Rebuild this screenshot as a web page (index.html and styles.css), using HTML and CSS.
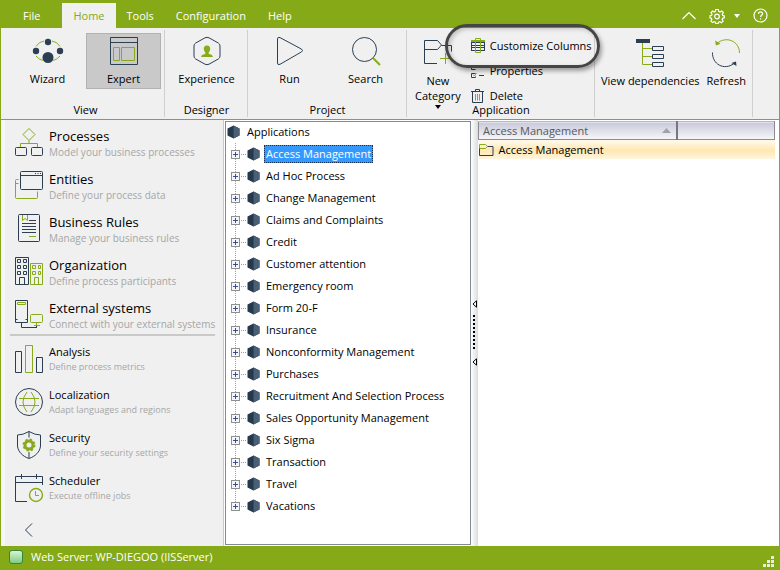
FILE: index.html
```html
<!DOCTYPE html>
<html lang="en">
<head>
  <meta charset="UTF-8">
  <meta name="viewport" content="width=device-width, initial-scale=1.0">
  <title>Web Server: WP-DIEGOO (IISServer)</title>
  <link rel="stylesheet" href="styles.css">
</head>
<body>
  <!-- Shared tree icon -->
  <svg class="defs" width="0" height="0" aria-hidden="true">
    <symbol id="hex" viewBox="0 0 13 14">
      <path d="M6.500 0.500 12.500 3.500V10.500L6.500 13.500 0.500 10.500V3.500Z" fill="#25394d"/>
      <path d="M6.500 0.500 12.500 3.500V10.500L6.500 13.500Z" fill="#4a5f73"/>
    </symbol>
  </svg>

  <!-- Tabs -->
  <header class="titlebar">
    <nav class="tabs">
      <button class="tab tab-file" type="button">File</button>
      <button class="tab active" type="button">Home</button>
      <button class="tab" type="button">Tools</button>
      <button class="tab" type="button">Configuration</button>
      <button class="tab" type="button">Help</button>
    </nav>
    <div class="tools">
      <button class="tool" type="button" aria-label="Collapse ribbon">
        <svg width="14" height="9" viewBox="0 0 14 9"><path d="M0.500 8 7 1.500 13.500 8"/></svg>
      </button>
      <button class="tool tool-settings" type="button" aria-label="Settings">
        <svg width="16" height="16" viewBox="0 0 16 16"><path d="M6.700 1.500h2.600l.4 1.900 1.300.6 1.700-1 1.600 1.700-1 1.700.4 1.100 1.600.3v2l-1.700.5-.5 1.200 1 1.600-1.700 1.600-1.600-1-1.300.5-.4 1.300H6.900l-.5-1.400-1.300-.5-1.600 1-1.600-1.500 1-1.700-.5-1.200L1 9.900V7.700l1.500-.3.500-1.100-1-1.700L3.600 3l1.600 1 1.100-.6z"/><circle cx="8" cy="8.500" r="2.300"/></svg>
        <svg width="6" height="4" viewBox="0 0 6 4"><path class="solid" d="M0 0h6L3 4z"/></svg>
      </button>
      <button class="tool" type="button" aria-label="Help">
        <svg width="15" height="15" viewBox="0 0 15 15"><circle cx="7.500" cy="7.500" r="6.500"/><path d="M5.500 6c0-2.800 4.200-2.600 4.100-.2C9.500 7.200 7.600 7.300 7.600 9M7.600 10.300v1.200"/></svg>
      </button>
    </div>
  </header>

  <!-- Ribbon -->
  <section class="ribbon">
    <div class="group group-view">
      <div class="group-items">
        <button class="big" type="button">
          <svg width="32" height="30" viewBox="0 0 32 30">
            <path class="g" d="M4 10.500Q7 5.500 12 5M20 5q5 .5 8 5.500M4 20q3 3.500 7 4.500M21 24.500q4-1 7-4.500"/>
            <circle class="fd" cx="16" cy="6" r="3.200"/><circle class="fd" cx="4" cy="15" r="3.200"/><circle class="fd" cx="28" cy="15" r="3.200"/><circle class="fd" cx="16" cy="21.500" r="5.500"/>
          </svg>
          <span>Wizard</span>
        </button>
        <button class="big pressed" type="button">
          <svg width="30" height="30" viewBox="0 0 30 30">
            <path class="d" d="M1.500 1.500h27v27h-27zM1.500 6.500h27"/>
            <path class="g" d="M4.500 11.500h6v13h-6zM12.500 11.500h13v13h-13z"/>
          </svg>
          <span>Expert</span>
        </button>
      </div>
      <div class="group-name">View</div>
    </div>
    <div class="group">
      <div class="group-items">
        <button class="big" type="button">
          <svg width="30" height="30" viewBox="0 0 30 30">
            <path class="d" d="M13 1.800q2-1 4 0l9.300 5.200q1.700 1 1.700 3v10q0 2-1.700 3L17 28.200q-2 1-4 0L3.700 23Q2 22 2 20V10q0-2 1.700-3z"/>
            <path class="fg" d="M15 9.500c2.600 0 3.400 1.800 3.200 3.700-.2 1.600-1 2.600-1.500 3.300v1.400c1.800.4 4 .8 4.300 3.100H9c.3-2.300 2.500-2.700 4.300-3.100v-1.400c-.5-.7-1.300-1.700-1.500-3.300-.2-1.900.6-3.700 3.200-3.700z"/>
          </svg>
          <span>Experience</span>
        </button>
      </div>
      <div class="group-name">Designer</div>
    </div>
    <div class="group">
      <div class="group-items">
        <button class="big" type="button">
          <svg width="30" height="30" viewBox="0 0 30 30"><path class="d" d="M2.500 3q0-2.500 2.500-1.400l21.500 11.500q2 1.400 0 2.800L5 28.300q-2.500 1.200-2.500-1.300z"/></svg>
          <span>Run</span>
        </button>
        <button class="big" type="button">
          <svg width="30" height="30" viewBox="0 0 30 30"><circle class="d" cx="13.500" cy="13.500" r="12"/><path class="g2" d="m22 22 7 7"/></svg>
          <span>Search</span>
        </button>
      </div>
      <div class="group-name">Project</div>
    </div>
    <div class="group group-app">
      <div class="group-items">
        <button class="big low" type="button">
          <svg width="30" height="30" viewBox="0 0 30 30">
            <path class="d" d="M14 25.500H1.500v-23h13l4 4.500-4 4.500h-13M18.500 7.500h10v6"/>
            <path class="g" d="M17 20.500h11M22.500 15v11"/>
          </svg>
          <span>New<br>Category</span>
          <svg class="drop" width="6" height="4" viewBox="0 0 6 4"><path d="M0 0h6L3 4z"/></svg>
        </button>
        <div class="small-list">
          <div class="callout-anchor">
            <button class="small" type="button">
              <svg width="16" height="16" viewBox="0 0 16 16">
                <path class="fd" d="M1 2h14v11H1z"/><path class="fg" d="M1 2h14v2H1z"/>
                <path class="cells" d="M2 5h3v2H2zM2 8h3v1H2zM2 10h3v2H2zM11 5h3v2h-3zM11 8h3v1h-3zM11 10h3v2h-3zM6 5h4v2H6zM6 8h4v1H6zM6 10h4v2H6zM6 13h4v2H6z"/>
                <path class="g" d="M5.500 .5h5v14h-5z"/>
              </svg>
              <span>Customize Columns</span>
            </button>
            <i class="callout"></i>
          </div>
          <button class="small" type="button">
            <svg width="16" height="16" viewBox="0 0 16 16"><path class="d" d="M5.500 2.500h-4v4h4M5.500 10.500h-4v4h4v-1M9 12.500h5"/><path class="g" d="m3 3.500 1.500 1.500 2-3M3 11.500l1.500 1.500 2-3"/></svg>
            <span>Properties</span>
          </button>
          <button class="small" type="button">
            <svg width="16" height="16" viewBox="0 0 16 16"><path class="d" d="M1 3.500h13M5.500 3.500v-2h4v2M2.500 3.500v11h10v-11"/><path class="g" d="M5.500 6v6.500M7.500 6v6.500M9.500 6v6.500"/></svg>
            <span>Delete</span>
          </button>
        </div>
      </div>
      <div class="group-name">Application</div>
    </div>
    <div class="group group-last">
      <div class="group-items">
        <button class="big low" type="button">
          <svg width="30" height="30" viewBox="0 0 30 30">
            <path class="fd" d="M1 1h14v4H1z"/><path class="g" d="M7.500 5v21.500H17M7.500 10.500H17M7.500 18.500H17"/>
            <path class="d" d="M17.500 8.500h11v4h-11zM17.500 16.500h11v4h-11zM17.500 24.500h11v4h-11z"/>
          </svg>
          <span>View dependencies</span>
        </button>
        <button class="big low" type="button">
          <svg width="30" height="30" viewBox="0 0 30 30">
            <path class="g" d="M6 5.500C15-2.500 28.500 3 28.500 15"/><path class="fg" d="m4 2.500 1 5 4.500-1.700z"/>
            <path class="d" d="M1.500 14.500C1 26 13 33 23 25.500"/><path class="fd" d="m20.500 25 4.500-1.500.5 4.500z"/>
          </svg>
          <span>Refresh</span>
        </button>
      </div>
    </div>
  </section>

  <main class="workspace">
    <!-- Module list -->
    <nav class="sidebar">
      <ul class="modules">
        <li><a class="module" href="#">
          <svg width="30" height="30" viewBox="0 0 30 30">
            <path class="g" d="m15 1.500 6 6-6 6-6-6zM15 13.500v3M6.500 20v-3.500h17V20"/>
            <rect class="d" x="1.500" y="20.500" width="11" height="8" rx="1"/><rect class="d" x="17.500" y="20.500" width="11" height="8" rx="1"/>
          </svg>
          <span class="text"><b>Processes</b><small>Model your business processes</small></span></a></li>
        <li><a class="module" href="#">
          <svg width="30" height="30" viewBox="0 0 30 30">
            <path class="g" d="M4.500 9.500h-2q-1 0-1 1v17q0 1 1 1h20q1 0 1-1v-6M1.500 13.500h3"/>
            <rect class="d" x="6.500" y="1.500" width="22" height="18" rx="1"/><path class="d" d="M6.500 5.500h22M21 3.500h1M23.500 3.500h1M26 3.500h1"/>
          </svg>
          <span class="text"><b>Entities</b><small>Define your process data</small></span></a></li>
        <li><a class="module" href="#">
          <svg width="30" height="30" viewBox="0 0 30 30">
            <rect class="d" x="4.500" y="1.500" width="21" height="27" rx="1"/><path class="d" d="M15 7.500h7M8 10.500h14M8 13.500h14M8 16.500h14M8 19.500h14"/>
            <path class="g" d="M8.500 2v5.500l2.500-2 2.500 2V2M15 23.500h7"/>
          </svg>
          <span class="text"><b>Business Rules</b><small>Manage your business rules</small></span></a></li>
        <li><a class="module" href="#">
          <svg width="30" height="30" viewBox="0 0 30 30">
            <path class="d" d="M1.500 1.500h13v27h-13zM3.500 3.500h3v3h-3zM9.500 3.500h3v3h-3zM3.500 9.500h3v3h-3zM9.500 9.500h3v3h-3zM3.500 15.500h3v3h-3zM9.500 15.500h3v3h-3zM5.500 28v-6.500h5V28"/>
            <path class="g" d="M16.500 7.500h12v21h-12zM18.500 9.500h3v3h-3zM24.500 9.500h2v3h-2zM18.500 15.500h3v3h-3zM24.500 15.500h2v3h-2zM20.500 28v-6.500h4V28"/>
          </svg>
          <span class="text"><b>Organization</b><small>Define process participants</small></span></a></li>
        <li><a class="module" href="#">
          <svg width="30" height="30" viewBox="0 0 30 30">
            <path class="d" d="M3.500 20.500h-2v3h12v-3h-2M1.500 21V1.500h12V21M7.500 23.500v5h15v-2M18 28.500h5"/>
            <path class="g" d="M3.500 3.500h8v2h-8z"/><rect class="g" x="16.500" y="15.500" width="12" height="8" rx="1"/><path class="g" d="M22.500 24v3M20 26.500h6"/>
          </svg>
          <span class="text"><b>External systems</b><small>Connect with your external systems</small></span></a></li>
      </ul>
      <ul class="modules minor">
        <li><a class="module" href="#">
          <svg width="30" height="30" viewBox="0 0 30 30"><path class="d" d="M1.500 7.500h6v21h-6zM22.500 13.500h6v15h-6z"/><path class="g" d="M11.500 1.500h7v27h-7z"/></svg>
          <span class="text"><b>Analysis</b><small>Define process metrics</small></span></a></li>
        <li><a class="module" href="#">
          <svg width="30" height="30" viewBox="0 0 30 30"><circle class="d" cx="15" cy="15" r="13.500"/><path class="g" d="M5 11.500h20M5 18.500h20M13 5q-8 10 0 20M17 5q8 10 0 20"/></svg>
          <span class="text"><b>Localization</b><small>Adapt languages and regions</small></span></a></li>
        <li><a class="module" href="#">
          <svg width="30" height="30" viewBox="0 0 30 30">
            <path class="d" d="M15 1.500Q9 5 3.500 5v11C4 22 9 26.500 15 28.500 21 26.500 26 22 26.500 16V5Q21 5 15 1.500zM15 1.500v6M15 22v6"/>
            <circle class="gear-teeth" cx="15" cy="15" r="5.500"/><circle class="gear-ring" cx="15" cy="15" r="4"/>
          </svg>
          <span class="text"><b>Security</b><small>Define your security settings</small></span></a></li>
        <li><a class="module" href="#">
          <svg width="30" height="30" viewBox="0 0 30 30">
            <path class="d" d="M13 28.500H1.500v-25h27V12M1.500 9.500h27M7.500 1v5M22.500 1v5"/>
            <circle class="g thick" cx="22" cy="22" r="6.500"/><path class="g" d="M21.500 18v4.500H25"/>
          </svg>
          <span class="text"><b>Scheduler</b><small>Execute offline jobs</small></span></a></li>
      </ul>
      <button class="back" type="button" aria-label="Collapse menu">
        <svg width="9" height="14" viewBox="0 0 9 14"><path class="d" d="M8 .5 1.500 7 8 13.500"/></svg>
      </button>
    </nav>

    <!-- Application tree -->
    <section class="tree">
      <div class="node root"><svg class="hex" width="13" height="14"><use href="#hex"/></svg><span class="name">Applications</span></div>
      <ul class="branch">
        <li class="node"><button class="plus" type="button" aria-label="Expand"></button><svg class="hex" width="13" height="14"><use href="#hex"/></svg><span class="name selected">Access Management</span></li>
        <li class="node"><button class="plus" type="button" aria-label="Expand"></button><svg class="hex" width="13" height="14"><use href="#hex"/></svg><span class="name">Ad Hoc Process</span></li>
        <li class="node"><button class="plus" type="button" aria-label="Expand"></button><svg class="hex" width="13" height="14"><use href="#hex"/></svg><span class="name">Change Management</span></li>
        <li class="node"><button class="plus" type="button" aria-label="Expand"></button><svg class="hex" width="13" height="14"><use href="#hex"/></svg><span class="name">Claims and Complaints</span></li>
        <li class="node"><button class="plus" type="button" aria-label="Expand"></button><svg class="hex" width="13" height="14"><use href="#hex"/></svg><span class="name">Credit</span></li>
        <li class="node"><button class="plus" type="button" aria-label="Expand"></button><svg class="hex" width="13" height="14"><use href="#hex"/></svg><span class="name">Customer attention</span></li>
        <li class="node"><button class="plus" type="button" aria-label="Expand"></button><svg class="hex" width="13" height="14"><use href="#hex"/></svg><span class="name">Emergency room</span></li>
        <li class="node"><button class="plus" type="button" aria-label="Expand"></button><svg class="hex" width="13" height="14"><use href="#hex"/></svg><span class="name">Form 20-F</span></li>
        <li class="node"><button class="plus" type="button" aria-label="Expand"></button><svg class="hex" width="13" height="14"><use href="#hex"/></svg><span class="name">Insurance</span></li>
        <li class="node"><button class="plus" type="button" aria-label="Expand"></button><svg class="hex" width="13" height="14"><use href="#hex"/></svg><span class="name">Nonconformity Management</span></li>
        <li class="node"><button class="plus" type="button" aria-label="Expand"></button><svg class="hex" width="13" height="14"><use href="#hex"/></svg><span class="name">Purchases</span></li>
        <li class="node"><button class="plus" type="button" aria-label="Expand"></button><svg class="hex" width="13" height="14"><use href="#hex"/></svg><span class="name">Recruitment And Selection Process</span></li>
        <li class="node"><button class="plus" type="button" aria-label="Expand"></button><svg class="hex" width="13" height="14"><use href="#hex"/></svg><span class="name">Sales Opportunity Management</span></li>
        <li class="node"><button class="plus" type="button" aria-label="Expand"></button><svg class="hex" width="13" height="14"><use href="#hex"/></svg><span class="name">Six Sigma</span></li>
        <li class="node"><button class="plus" type="button" aria-label="Expand"></button><svg class="hex" width="13" height="14"><use href="#hex"/></svg><span class="name">Transaction</span></li>
        <li class="node"><button class="plus" type="button" aria-label="Expand"></button><svg class="hex" width="13" height="14"><use href="#hex"/></svg><span class="name">Travel</span></li>
        <li class="node"><button class="plus" type="button" aria-label="Expand"></button><svg class="hex" width="13" height="14"><use href="#hex"/></svg><span class="name">Vacations</span></li>
      </ul>
    </section>

    <div class="splitter">
      <svg width="5" height="66" viewBox="0 0 5 66">
        <path class="arrow" d="M4.500 .8v6.400L1 4zM4.500 58.800v6.400L1 62z"/>
        <path d="M1 15h2v2H1zM1 19h2v2H1zM1 23h2v2H1zM1 27h2v2H1zM1 31h2v2H1zM1 35h2v2H1zM1 39h2v2H1zM1 43h2v2H1zM1 47h2v2H1z"/>
      </svg>
    </div>

    <!-- Details -->
    <section class="details">
      <table class="grid">
        <thead>
          <tr>
            <th class="col-name" scope="col"><div class="th">Access Management<svg width="9" height="5" viewBox="0 0 9 5"><path d="M0 5h9L4.500 0z"/></svg></div></th>
            <th></th>
          </tr>
        </thead>
        <tbody>
          <tr>
            <td colspan="2"><div class="cell"><svg width="15" height="13" viewBox="0 0 15 13"><path class="d" d="M.5 4v8.500h13.500v-9H8"/><path class="g" d="M.5 5V1.500h6l2 2-2 2h-6"/></svg>Access Management</div></td>
          </tr>
        </tbody>
      </table>
    </section>
  </main>

  <footer class="status">
    <i class="led"></i>
    <span>Web Server: WP-DIEGOO (IISServer)</span>
    <svg class="grip" width="12" height="12" viewBox="0 0 12 12"><path d="M8 0h3v3H8zM8 4h3v3H8zM8 8h3v3H8zM4 4h3v3H4zM4 8h3v3H4zM0 8h3v3H0z"/></svg>
  </footer>
</body>
</html>
```
FILE: styles.css
```css
/* Base */
* {
  margin: 0;
  padding: 0;
  box-sizing: border-box;
}
body {
  min-height: 100vh;
  display: flex;
  flex-direction: column;
  font-family: "Open Sans", "Noto Sans", sans-serif;
  font-size: 11px;
  line-height: 16px;
  color: #000;
  background: #86aa17;
}
button {
  font: inherit;
  color: inherit;
  background: none;
  border: 0;
}
svg {
  display: block;
  flex: none;
}
ul {
  list-style: none;
}
.defs {
  position: absolute;
}

/* Icon strokes and fills */
.d, .g, .g2 {
  fill: none;
  stroke: #2b3e52;
}
.g, .g2 {
  stroke: #88ab1b;
}
.g2 {
  stroke-width: 2;
}
.thick {
  stroke-width: 1.4;
}
.fd {
  fill: #2b3e52;
}
.fg {
  fill: #88ab1b;
}
.cells {
  fill: #f0f0f0;
}
.gear-ring {
  fill: none;
  stroke: #88ab1b;
  stroke-width: 3;
}
.gear-teeth {
  fill: none;
  stroke: #88ab1b;
  stroke-width: 2;
  stroke-dasharray: 2.300 2.020;
}

/* Title bar */
.titlebar {
  display: flex;
  justify-content: space-between;
  height: 28px;
  padding: 3px 12px 0 1px;
  color: #fff;
}
.tabs {
  display: flex;
}
.tab {
  padding: 0 11px;
}
.tab-file {
  padding: 0 22px;
}
.tab.active {
  color: #86aa17;
  background: #f0f0f0;
}
.tools {
  display: flex;
  align-items: center;
  gap: 13px;
}
.tool {
  display: flex;
  align-items: center;
  gap: 9px;
}
.tool path, .tool circle {
  fill: none;
  stroke: #fff;
  stroke-width: 1.2;
}
.tool .solid {
  fill: #fff;
  stroke: none;
}

/* Ribbon */
.ribbon {
  display: flex;
  height: 91px;
  margin: 0 1px;
  background: #f0f0f0;
}
.group {
  display: flex;
  flex-direction: column;
  justify-content: space-between;
  margin-top: 2px;
  margin-bottom: 2px;
  padding: 3px 3px 0 4px;
  border-right: 1px solid #cfcfcf;
}
.group-view {
  padding-left: 9px;
}
.group-items {
  display: flex;
  gap: 1px;
}
.group-name {
  line-height: 14px;
  text-align: center;
}
.big {
  display: flex;
  flex-direction: column;
  align-items: center;
  width: 75px;
  height: 56px;
  padding-top: 3px;
  line-height: 15px;
  white-space: nowrap;
}
.big span {
  margin-top: 5px;
}
.pressed {
  background: #c9c9c9;
  outline: 1px solid #b2b2b2;
  outline-offset: -1px;
}
.low {
  width: auto;
  padding-top: 5px;
}
.drop {
  margin-top: 2px;
}
.group-app {
  width: 188px;
}
.group-app .group-items {
  gap: 9px;
  padding-left: 4px;
  height: 66px;
}
.small-list {
  display: flex;
  flex-direction: column;
  gap: 9px;
  padding-top: 5px;
}
.small {
  display: flex;
  align-items: center;
  gap: 4px;
  line-height: 14px;
  white-space: nowrap;
}
.callout-anchor {
  position: relative;
}
.callout {
  position: absolute;
  inset: -14px -8px -14px -25px;
  border: 3px solid #454545;
  border-radius: 22px;
  box-shadow: 2px 3px 4px rgba(0, 0, 0, 0.35), inset 2px 2px 4px rgba(0, 0, 0, 0.2);
  pointer-events: none;
}
.group-last {
  padding: 3px 6px 0;
}
.group-last .group-items {
  gap: 7px;
}

/* Workspace */
.workspace {
  flex: 1;
  display: flex;
  margin: 1px 1px 0;
  background: #fff;
}
.sidebar {
  width: 223px;
  padding: 7px 8px 0 5px;
  background: #f0f0f0;
  border-left: 4px solid #f7f7f7;
  border-right: 1px solid #c9c9c9;
}
.modules {
  display: flex;
  flex-direction: column;
  gap: 8px;
  padding-left: 4px;
  border-bottom: 2px solid #c9c9c9;
}
.module {
  display: flex;
  gap: 5px;
  height: 35px;
  color: #000;
  text-decoration: none;
  white-space: nowrap;
}
.text b, .text small {
  display: block;
  font-weight: normal;
}
.text b {
  font-size: 13px;
  line-height: 18px;
}
.text small {
  font-size: 10px;
  line-height: 15px;
  color: #a6a6a6;
}
.minor {
  padding-top: 8px;
  border: 0;
}
.minor b {
  font-size: 11px;
  line-height: 16px;
}
.minor small {
  font-size: 9px;
  line-height: 14px;
}
.back {
  margin: 15px 0 0 14px;
}

/* Tree */
.tree {
  width: 246px;
  margin: 1px 0 1px 1px;
  border: 1px solid #838a94;
}
.node {
  display: flex;
  align-items: center;
  height: 22px;
}
.root {
  height: 21px;
  padding: 0 0 2px 1px;
  gap: 5px;
}
.branch {
  margin-left: 9px;
}
.branch .node {
  margin-left: -4px;
  background:
    repeating-linear-gradient(to bottom, #a0a0a0 0 1px, transparent 1px 2px) 4px 0 / 1px 100% no-repeat,
    repeating-linear-gradient(to right, #a0a0a0 0 1px, transparent 1px 2px) 10px 11px / 5px 1px no-repeat;
}
.branch .node:last-child {
  background-size: 1px 50%, 5px 1px;
}
.branch .hex {
  margin-left: 7px;
}
.branch .name {
  margin-left: 4px;
}
.name {
  padding: 0 1px;
  border: 1px solid transparent;
  white-space: nowrap;
}
.selected {
  color: #fff;
  background: #3399ff;
  border: 1px dotted #12325c;
}
.plus {
  width: 9px;
  height: 9px;
  border: 1px solid #8e8f8f;
  background:
    linear-gradient(#2f4f9f, #2f4f9f) center / 5px 1px no-repeat,
    linear-gradient(#2f4f9f, #2f4f9f) center / 1px 5px no-repeat,
    #f6f6f6;
}

/* Splitter */
.splitter {
  display: flex;
  align-items: center;
  width: 7px;
  padding-left: 1px;
  background: linear-gradient(to right, #fff, #dcdcdc);
}
.splitter .arrow {
  fill: #fff;
  stroke: #000;
}

/* Details */
.details {
  flex: 1;
  padding: 1px 4px 0 0;
}
.grid {
  width: 100%;
  table-layout: fixed;
  border-collapse: collapse;
}
.grid th {
  height: 18px;
  line-height: 15px;
  font-weight: normal;
  text-align: left;
  color: #555860;
  background: linear-gradient(#c9c8d9, #f7f7fa);
  border: 1px solid #8b8b93;
  border-top-color: #b9b9c4;
}
.grid .col-name {
  width: 67%;
  border-right: 2px solid #77777f;
}
.th {
  display: flex;
  align-items: center;
  justify-content: space-between;
  padding: 0 5px 0 4px;
}
.th path {
  fill: #a2a2ac;
}
.grid td {
  background: linear-gradient(#fffaf0, #ffe7ae 50%, #fff6e2);
}
.cell {
  display: flex;
  align-items: center;
  gap: 5px;
  height: 19px;
}

/* Status bar */
.status {
  display: flex;
  align-items: center;
  gap: 8px;
  height: 24px;
  padding: 0 5px 2px 9px;
  color: #fff;
}
.led {
  width: 14px;
  height: 14px;
  border: 1px solid #2f8a3c;
  border-radius: 3px;
  background: linear-gradient(#d9f3d4, #7fcb83);
}
.grip {
  align-self: flex-end;
  margin-left: auto;
  fill: #e9eed8;
}
```
